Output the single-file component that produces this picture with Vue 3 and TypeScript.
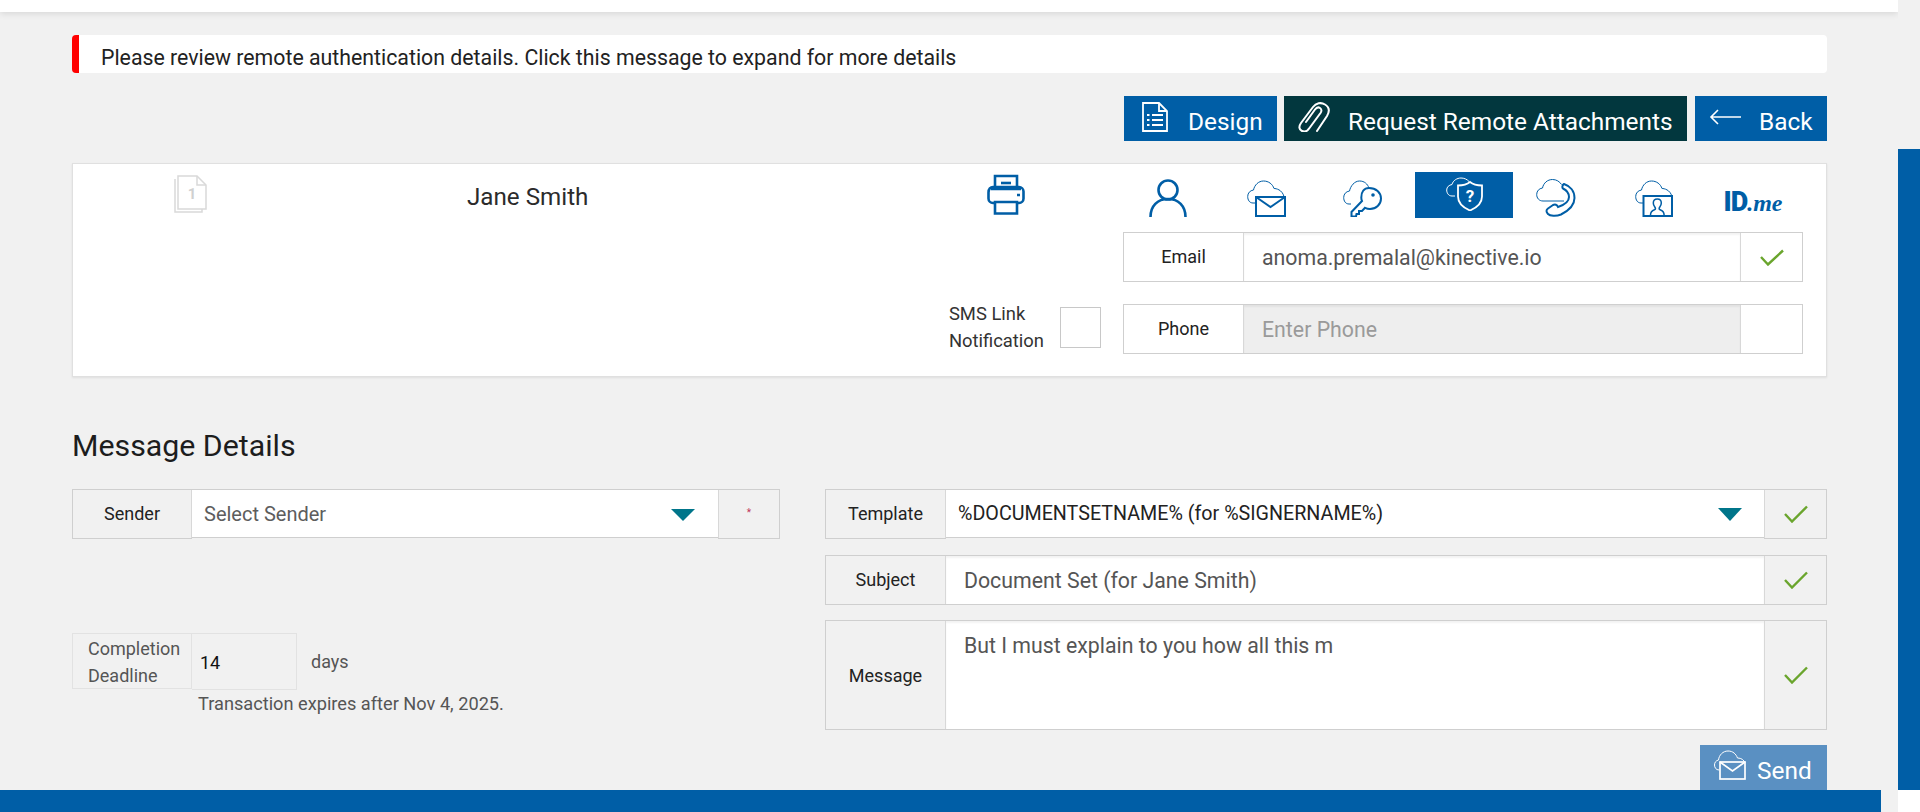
<script setup lang="ts">
const tabs = ['person', 'mail', 'key', 'shield', 'phone', 'video', 'idme']
const activeTab = 'shield'
</script>

<template>
  <div class="page">
    <div class="top-bar"></div>

    <main class="content">
      <div class="alert">Please review remote authentication details. Click this message to expand for more details</div>

      <div class="actions">
        <button class="btn btn-design">
          <svg class="btn-icon" width="26" height="30" viewBox="0 0 26 30" fill="none" stroke="#fff" stroke-width="1.800">
            <path d="M1 1h16l8 8v20H1z" />
            <path d="M17 1v8h8" />
            <path d="M5 13h2.500M10 13h11M5 18h2.500M10 18h11M5 23h2.500M10 23h11" />
          </svg>
          <span class="btn-label design-label">Design</span>
        </button>
        <button class="btn btn-dark btn-request">
          <svg class="btn-icon" width="32" height="30" viewBox="0 0 32 30" fill="none" stroke="#fff" stroke-width="2" stroke-linecap="round">
            <path d="M19 29 29 14c3-5 2-9-2-11.500S18 1 15 5L3 21c-2.500 3.500-2 6.500 1 8s5.500 0 7.500-3l11-15c1.500-2.200 1-4-.5-5s-3.500-.5-5 1.500L8 20" />
          </svg>
          <span class="btn-label design-label">Request Remote Attachments</span>
        </button>
        <button class="btn btn-back">
          <svg class="btn-icon" width="32" height="16" viewBox="0 0 32 16" fill="none" stroke="#fff" stroke-width="1.600">
            <path d="M32 8H2M9 1 2 8l7 7" />
          </svg>
          <span class="btn-label design-label">Back</span>
        </button>
      </div>

      <section class="signer-card">
        <div class="signer-left">
          <svg class="doc-icon" width="33" height="38" viewBox="0 0 33 38" fill="none" stroke="#d9d9d9" stroke-width="1.500">
            <path d="M1 4v33h27v-3" />
            <path d="M4 1h19l9 9v24H4z" fill="#fff" />
            <path d="M23 1v9h9" />
            <text x="18" y="24" class="doc-num">1</text>
          </svg>
          <div class="signer-name">Jane Smith</div>
          <svg class="printer-icon" width="38" height="41" viewBox="0 0 38 41" fill="none" stroke="#005ea6" stroke-width="2.600">
            <path d="M8 15V2h22v13" />
            <path d="M14 9h10" />
            <path d="M8 29H6c-2.500 0-4.500-2-4.500-4.500v-6C1.500 15 3.500 13 6 13h26c2.500 0 4.500 2 4.500 4.500v7c0 2.500-2 4.500-4.500 4.500h-2" />
            <path d="M8 28h22v11.500H8z" />
            <path d="M4 15h30M30 21h3" />
          </svg>
        </div>

        <div class="signer-right">
          <div class="tabs">
            <div v-for="tab in tabs" :key="tab" class="tab" :class="{ active: tab === activeTab }">
              <svg v-if="tab === 'person'" width="38" height="38" viewBox="0 0 38 38" fill="none" stroke="#005ea6" stroke-width="2.600">
                <circle cx="19" cy="11" r="9.500" />
                <path d="M1.500 38c0-11 7-18 17.500-18s17.500 7 17.500 18" />
              </svg>
              <svg v-else-if="tab === 'mail'" width="39" height="38" viewBox="0 0 39 38" fill="none" stroke="#005ea6">
                <path d="M9 24H6C2.500 24 .7 21 .7 17.500S3 11.500 6.500 11c1-5 5-9 10-9 5 0 9 3 10.500 7.500 2 0 8 1 10 8" />
                <rect x="9" y="18" width="29" height="19" fill="#fff" stroke-width="2" />
                <path d="m9 18 14.500 10L38 18" stroke-width="2" />
              </svg>
              <svg v-else-if="tab === 'key'" width="39" height="38" viewBox="0 0 39 38" fill="none" stroke="#005ea6">
                <path d="M8 25H6C2.500 25 .7 22 .7 18.500S3 12.500 6.500 12c1-5 5-10 10-10 5 0 8 3 9.500 7" />
                <path d="M26 9c7 0 12 4.500 12 10.500S33 30 27 30c-2 0-3.500-.5-5-1.200L19 32h-3v3h-2.500l-.5 2.500H8.500V33L19 22c-.5-1-.7-2-.7-3.500C18.300 13 21 9 26 9z" fill="#fff" stroke-width="2" />
                <circle cx="30" cy="16" r="1.800" fill="#005ea6" stroke="none" />
              </svg>
              <svg v-else-if="tab === 'shield'" class="shield-icon" width="37" height="34" viewBox="0 0 37 34" fill="none" stroke="#fff">
                <path d="M9 19H6C2.500 19 .7 16 .7 13S3 8 6 7.500C7 3.500 11 1 15 1c3 0 6 1.200 8 3.500" />
                <path d="M24 5c3 2.500 8 3.500 12 3.500v11C36 27 30 31 24 33.500 18 31 12 27 12 19.500v-11C16 8.500 21 7.500 24 5z" fill="#005ea6" stroke-width="1.800" />
                <text x="24" y="25" class="shield-q">?</text>
              </svg>
              <svg v-else-if="tab === 'phone'" width="40" height="38" viewBox="0 0 40 38" fill="none" stroke="#005ea6">
                <path d="M28 22H7C3 22 .7 19 .7 15.500S3 9.500 6.500 9c1-5 5-8.500 10-8.500 4 0 7 2 9 5" />
                <path d="M28 5C34 7 38.500 12 38.500 19 38.500 27 32 32 25 35.500 20 37.500 14 37 12 35 10 33 10 31 12 29.500L17 26C19 25 21 25.500 22 28 28 26 33 23 33 18 33 14 30 11 27 9.500 26 9 26 6 28 5z" fill="#fff" stroke-width="2" />
              </svg>
              <svg v-else-if="tab === 'video'" width="38" height="38" viewBox="0 0 38 38" fill="none" stroke="#005ea6">
                <path d="M8 24H6C2.500 24 .7 21 .7 17.500S3 11.500 6.500 11c1-5 5-9 10-9 5 0 9 3 10.500 7.500 2 0 8 1 10 8" />
                <rect x="8.500" y="17" width="28.500" height="20" fill="#fff" stroke-width="2" />
                <path d="M15.500 36c0-3 1-4 4-5.200 1.500-.6 1-1.800.3-2.800-1-1.200-1.500-2.500-1.500-4 0-2.500 1.300-4 4-4s4 1.500 4 4c0 1.500-.5 2.800-1.500 4-.7 1-1.200 2.200.3 2.800 3 1.200 4 2.200 4 5.200" stroke-width="1.500" />
              </svg>
              <span v-else class="idme">ID<i>.me</i></span>
            </div>
          </div>

          <div class="contact-row">
            <div class="field contact-field">
              <label class="field-label wide white">Email</label>
              <div class="field-value text-value">anoma.premalal@kinective.io</div>
              <div class="field-status white">
                <svg class="check" width="24" height="17" viewBox="0 0 24 17" fill="none" stroke="#6aa52d" stroke-width="2.400"><path d="m1 8 7 7.500L23 1.500" /></svg>
              </div>
            </div>
          </div>

          <div class="contact-row phone-row">
            <div class="sms">
              <span class="sms-text">SMS Link<br />Notification</span>
              <span class="sms-box"></span>
            </div>
            <div class="field contact-field">
              <label class="field-label wide white">Phone</label>
              <div class="field-value text-value disabled">Enter Phone</div>
              <div class="field-status white"></div>
            </div>
          </div>
        </div>
      </section>

      <h2 class="section-title">Message Details</h2>

      <div class="details">
        <div class="details-left">
          <div class="field">
            <label class="field-label">Sender</label>
            <div class="field-value select placeholder">
              Select Sender
              <span class="caret"></span>
            </div>
            <div class="field-status required">*</div>
          </div>

          <div class="deadline">
            <div class="deadline-row">
              <div class="deadline-label">Completion<br />Deadline</div>
              <div class="deadline-input">14</div>
              <div class="deadline-days">days</div>
            </div>
            <div class="deadline-note">Transaction expires after Nov 4, 2025.</div>
          </div>
        </div>

        <div class="details-right">
          <div class="field">
            <label class="field-label wide">Template</label>
            <div class="field-value select template-value">
              %DOCUMENTSETNAME% (for %SIGNERNAME%)
              <span class="caret"></span>
            </div>
            <div class="field-status">
              <svg class="check" width="24" height="18" viewBox="0 0 24 18" fill="none" stroke="#6aa52d" stroke-width="2.400"><path d="m1 9 7 7.500L23 1.500" /></svg>
            </div>
          </div>
          <div class="field">
            <label class="field-label wide">Subject</label>
            <div class="field-value text-value">Document Set (for Jane Smith)</div>
            <div class="field-status">
              <svg class="check" width="24" height="18" viewBox="0 0 24 18" fill="none" stroke="#6aa52d" stroke-width="2.400"><path d="m1 9 7 7.500L23 1.500" /></svg>
            </div>
          </div>
          <div class="field message-field">
            <label class="field-label wide">Message</label>
            <div class="field-value text-value message-value">But I must explain to you how all this m</div>
            <div class="field-status">
              <svg class="check" width="24" height="18" viewBox="0 0 24 18" fill="none" stroke="#6aa52d" stroke-width="2.400"><path d="m1 9 7 7.500L23 1.500" /></svg>
            </div>
          </div>
          <div class="send-row">
            <button class="btn send">
              <svg class="send-icon" width="32" height="30" viewBox="0 0 32 30" fill="none" stroke="#fff">
                <path d="M5 20c-3 0-4.500-2.500-4.500-5S2 10.500 4.500 10C5 5 9 1 14 1c5 0 8 3 9.500 7 4 0 6.500 2 7.500 5" />
                <rect x="6" y="12" width="25" height="17" stroke-width="1.700" fill="#5a90c2" />
                <path d="m6 12 12.500 9L31 12" stroke-width="1.700" />
              </svg>
              <span class="btn-label">Send</span>
            </button>
          </div>
        </div>
      </div>
    </main>

    <div class="scroll-thumb"></div>
    <div class="bottom-bar"></div>
    <div class="corner"></div>
  </div>
</template>

<style>
html,
body {
  margin: 0;
  height: 100%;
  overflow: hidden;
  background: #f1f1f1;
}
</style>

<style scoped>
.page {
  position: relative;
  width: 1920px;
  height: 812px;
  overflow: hidden;
  background: #f1f1f1;
  font-family: Roboto, "Liberation Sans", sans-serif;
  color: #222;
}

.top-bar {
  width: 1898px;
  height: 12px;
  background: #fff;
  box-shadow: 0 2px 6px rgba(0, 0, 0, 0.1);
  clip-path: inset(0 0 -20px 0);
}

.content {
  width: 1755px;
  margin-left: 72px;
  padding-top: 23px;
}

.alert {
  height: 38px;
  box-sizing: border-box;
  padding-left: 22px;
  border-left: 7px solid #f00;
  border-radius: 4px;
  background: #fff;
  font-size: 21.3px;
  line-height: 46px;
  color: #222;
  overflow: hidden;
}

.actions {
  display: flex;
  justify-content: flex-end;
  margin-top: 23px;
  gap: 7px;
}

.btn {
  display: flex;
  align-items: center;
  height: 45px;
  border: 0;
  padding: 0;
  background: #005ea6;
  color: #fff;
  font-family: inherit;
  font-size: 24.4px;
}

.btn-dark {
  background: #02373e;
}

.btn-icon {
  flex: none;
  margin-top: -4px;
}

.btn-label {
  padding-top: 5px;
}

.btn-design {
  width: 153px;
  padding-left: 18px;
}

.btn-request {
  width: 403px;
  padding-left: 14px;
}

.btn-back {
  width: 132px;
  margin-left: 1px;
  padding-left: 14px;
}

.btn-design .design-label {
  margin-left: 20px;
}

.design-label {
  margin-left: 18px;
}

.signer-card {
  display: flex;
  height: 214px;
  box-sizing: border-box;
  margin-top: 22px;
  border: 1px solid #e0e0e0;
  background: #fff;
  box-shadow: 0 1px 2px rgba(0, 0, 0, 0.08);
}

.signer-left {
  display: flex;
  flex: none;
  align-items: flex-start;
  width: 1050px;
  padding-top: 10px;
}

.doc-icon {
  margin-top: 1px;
  margin-left: 101px;
}

.signer-name {
  margin-left: 260px;
  margin-top: 10px;
  font-size: 24.2px;
  line-height: 26px;
  color: #2b2b2b;
}

.printer-icon {
  margin-left: 399px;
}

.doc-num {
  font-family: Roboto, sans-serif;
  font-size: 15px;
  font-weight: 700;
  text-anchor: middle;
  fill: #d0d0d0;
  stroke: none;
}

.shield-q {
  font-family: Roboto, sans-serif;
  font-size: 17px;
  font-weight: 700;
  text-anchor: middle;
  fill: #fff;
  stroke: none;
}

.signer-right {
  flex: none;
  width: 680px;
  padding-top: 8px;
}

.tabs {
  display: grid;
  grid-template-columns: 98px 98px 100px 98px 86px 110px 88px;
  height: 46px;
  margin-left: -4px;
}

.tab {
  display: flex;
  align-items: flex-end;
  justify-content: center;
  height: 46px;
  padding-bottom: 1px;
  box-sizing: border-box;
}

.tab:nth-child(3) {
  padding-right: 5px;
}

.tab.active {
  align-items: flex-start;
  padding-top: 5px;
  background: #005ea6;
}

.idme {
  margin-bottom: 1px;
  font-size: 27px;
  font-weight: 900;
  line-height: 26px;
  letter-spacing: -1px;
  color: #005ea6;
}

.idme i {
  font-family: "Liberation Serif", serif;
  font-size: 24px;
  font-weight: 700;
  letter-spacing: 0;
}

.contact-row {
  display: flex;
  justify-content: flex-end;
  margin-top: 14px;
}

.phone-row {
  position: relative;
  margin-top: 22px;
}

.sms {
  position: absolute;
  right: 702px;
  top: -4px;
  display: flex;
  align-items: center;
  gap: 16px;
  white-space: nowrap;
}

.sms-text {
  font-size: 18.4px;
  line-height: 27px;
  color: #333;
}

.sms-box {
  width: 39px;
  height: 39px;
  margin-top: 1px;
  border: 1px solid #c8c8c8;
  background: #fff;
}

.field {
  display: flex;
  height: 50px;
  box-sizing: border-box;
  border: 1px solid #cfcfcf;
}

.contact-field {
  width: 680px;
}

.field-label {
  display: flex;
  flex: none;
  align-items: center;
  justify-content: center;
  width: 118px;
  padding-bottom: 2px;
  border-right: 1px solid #d8d8d8;
  font-size: 18px;
  color: #222;
}

.field-label.wide {
  width: 119px;
}

.field-label.white {
  background: #fff;
}

.field-value {
  position: relative;
  flex: 1;
  display: flex;
  align-items: center;
  background: #fff;
  box-shadow: inset 0 2px 2px rgba(0, 0, 0, 0.05);
  font-size: 21.3px;
  color: #555;
}

.disabled {
  background: #eee;
  color: #9a9a9a;
}

.field-status {
  display: flex;
  flex: none;
  align-items: center;
  justify-content: center;
  width: 61px;
  border-left: 1px solid #d8d8d8;
}

.field-status.white {
  background: #fff;
}

.select {
  padding-left: 12px;
  font-size: 20px;
  color: #5d5d5d;
  box-shadow: inset 0 -1px #cfcfcf, 0 1px #f1f1f1;
}

.caret {
  position: absolute;
  right: 23px;
  top: 19px;
  width: 0;
  height: 0;
  border-left: 12px solid transparent;
  border-right: 12px solid transparent;
  border-top: 12px solid #00758a;
}

.required {
  width: 60px;
  padding-bottom: 3px;
  font-size: 10px;
  color: #c0365a;
}

.template-value {
  padding-left: 12px;
  padding-bottom: 1px;
  font-size: 19.7px;
  color: #222;
}

.template-value .caret {
  right: 22px;
  top: 18px;
  border-top-width: 13px;
}

.text-value {
  padding-left: 18px;
}

.section-title {
  margin: 51px 0 0;
  font-size: 30.3px;
  font-weight: 400;
  line-height: 36px;
  color: #1d1d1d;
}

.details {
  display: flex;
  justify-content: space-between;
  margin-top: 25px;
}

.details-left {
  width: 708px;
}

.details-right {
  display: flex;
  flex-direction: column;
  gap: 16px;
  width: 1002px;
}

.message-field {
  height: 110px;
  margin-top: -1px;
}

.message-field .field-label {
  padding-bottom: 0;
}

.message-value {
  align-items: flex-start;
  padding-top: 12px;
}

.send-row {
  display: flex;
  justify-content: flex-end;
  margin-top: -1px;
}

.send {
  gap: 11px;
  width: 127px;
  padding-left: 14px;
  background: #5a90c2;
}

.send-icon {
  margin-top: -6px;
}

.deadline {
  margin-top: 94px;
}

.deadline-row {
  display: flex;
  align-items: flex-start;
}

.deadline-label {
  box-sizing: border-box;
  width: 120px;
  height: 56px;
  padding-top: 1px;
  padding-left: 15px;
  border: 1px solid #e2e2e2;
  font-size: 18px;
  line-height: 27px;
  color: #555;
}

.deadline-input {
  box-sizing: border-box;
  width: 105px;
  height: 57px;
  padding-left: 8px;
  border: 1px solid #e2e2e2;
  border-left: 0;
  font-size: 18px;
  line-height: 58px;
  color: #111;
}

.deadline-days {
  margin-left: 14px;
  font-size: 18px;
  line-height: 57px;
  color: #555;
}

.deadline-note {
  margin-left: 126px;
  font-size: 18.2px;
  line-height: 28px;
  color: #555;
}

.scroll-thumb {
  position: absolute;
  right: 0;
  top: 149px;
  width: 22px;
  height: 641px;
  background: #005ea6;
}

.bottom-bar {
  position: absolute;
  left: 0;
  bottom: 0;
  width: 1881px;
  height: 22px;
  background: #005ea6;
}

.corner {
  position: absolute;
  right: 0;
  bottom: 0;
  width: 22px;
  height: 22px;
  background: #fff;
}
</style>
